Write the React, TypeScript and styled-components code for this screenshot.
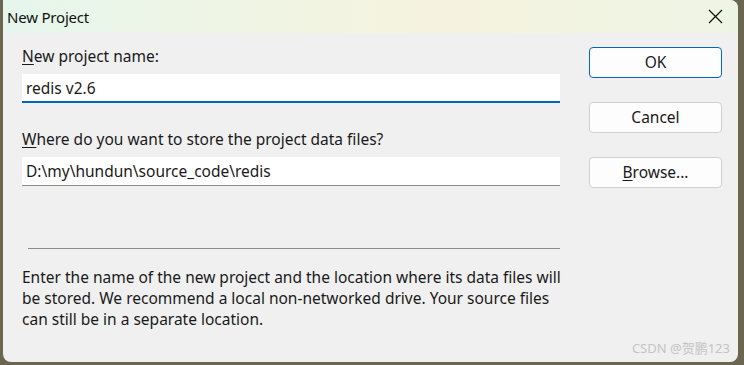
import React from 'react';
import styled, { createGlobalStyle } from 'styled-components';

const GlobalStyle = createGlobalStyle`
  html, body {
    margin: 0;
    padding: 0;
    background: #6b6650;
  }
  body {
    font-family: "Noto Sans", "Open Sans", sans-serif;
    color: #1a1a1a;
  }
`;

const Desktop = styled.div`
  width: 744px;
  height: 365px;
  box-sizing: border-box;
  padding: 0 6px 3px 3px;
  display: flex;
`;

const Dialog = styled.div`
  position: relative;
  flex: 1;
  display: flex;
  flex-direction: column;
  background: #f0f0f0;
  border-radius: 0 8px 8px 8px;
  overflow: hidden;
`;

const TitleBar = styled.div`
  height: 33px;
  flex-shrink: 0;
  display: flex;
  align-items: center;
  justify-content: space-between;
  padding: 0 0 0 4px;
  background: linear-gradient(90deg, #e6f6ec 0%, #f1f4e2 40%, #f5f3df 60%, #eef4e4 100%);
`;

const Title = styled.span`
  font-size: 15px;
  color: #111;
  letter-spacing: -0.2px;
`;

const CloseButton = styled.div`
  width: 46px;
  height: 33px;
  display: flex;
  align-items: center;
  justify-content: center;
`;

const Body = styled.div`
  flex: 1;
  display: flex;
  gap: 29px;
  padding: 0 16px 0 19px;
  font-size: 15.5px;
`;

const LeftColumn = styled.div`
  width: 538px;
  display: flex;
  flex-direction: column;
`;

const Label = styled.div<{ $top: number }>`
  margin-top: ${p => p.$top}px;
  line-height: 20px;
`;

const Key = styled.span`
  text-decoration: underline;
  text-underline-offset: 2px;
`;

const Input = styled.div<{ $focused?: boolean }>`
  margin-top: 8px;
  height: 29px;
  box-sizing: border-box;
  background: #ffffff;
  padding: 0 4px;
  display: flex;
  align-items: center;
  border-bottom: ${p => (p.$focused ? '2px solid #0067c0' : '1px solid #8a8a8a')};
  padding-top: ${p => (p.$focused ? '1px' : '0')};
`;

const Separator = styled.div`
  margin: 62px 0 0 6px;
  height: 1px;
  background: #8c8c8c;
`;

const Description = styled.p`
  margin: 18px 0 0 0;
  line-height: 21px;
  white-space: nowrap;
`;

const RightColumn = styled.div`
  width: 133px;
  padding-top: 14px;
  display: flex;
  flex-direction: column;
  gap: 24px;
`;

const Button = styled.div<{ $primary?: boolean }>`
  height: 31px;
  box-sizing: border-box;
  border-radius: 4px;
  background: #fdfdfd;
  border: 1px solid ${p => (p.$primary ? '#0067c0' : '#d0d0d0')};
  display: flex;
  align-items: center;
  justify-content: center;
  padding-bottom: 2px;
`;

const Watermark = styled.div`
  position: absolute;
  right: 8px;
  bottom: 5px;
  font-size: 13px;
  color: #c4c4c4;
  font-family: "Noto Sans", "Noto Sans CJK SC", sans-serif;
`;

export default function App() {
  return (
    <>
      <GlobalStyle />
      <Desktop>
        <Dialog>
          <TitleBar>
            <Title>New Project</Title>
            <CloseButton>
              <svg width="15" height="15" viewBox="0 0 15 15">
                <path d="M1 1 L14 14 M14 1 L1 14" stroke="#111" strokeWidth="1.2" />
              </svg>
            </CloseButton>
          </TitleBar>
          <Body>
            <LeftColumn>
              <Label $top={13}>
                <Key>N</Key>ew project name:
              </Label>
              <Input $focused>redis v2.6</Input>
              <Label $top={26}>
                <Key>W</Key>here do you want to store the project data files?
              </Label>
              <Input>D:\my\hundun\source_code\redis</Input>
              <Separator />
              <Description>
                Enter the name of the new project and the location where its data files will
                <br />
                be stored. We recommend a local non-networked drive. Your source files
                <br />
                can still be in a separate location.
              </Description>
            </LeftColumn>
            <RightColumn>
              <Button $primary>OK</Button>
              <Button>Cancel</Button>
              <Button>
                <span>
                  <Key>B</Key>rowse...
                </span>
              </Button>
            </RightColumn>
          </Body>
          <Watermark>CSDN @贺鹏123</Watermark>
        </Dialog>
      </Desktop>
    </>
  );
}
